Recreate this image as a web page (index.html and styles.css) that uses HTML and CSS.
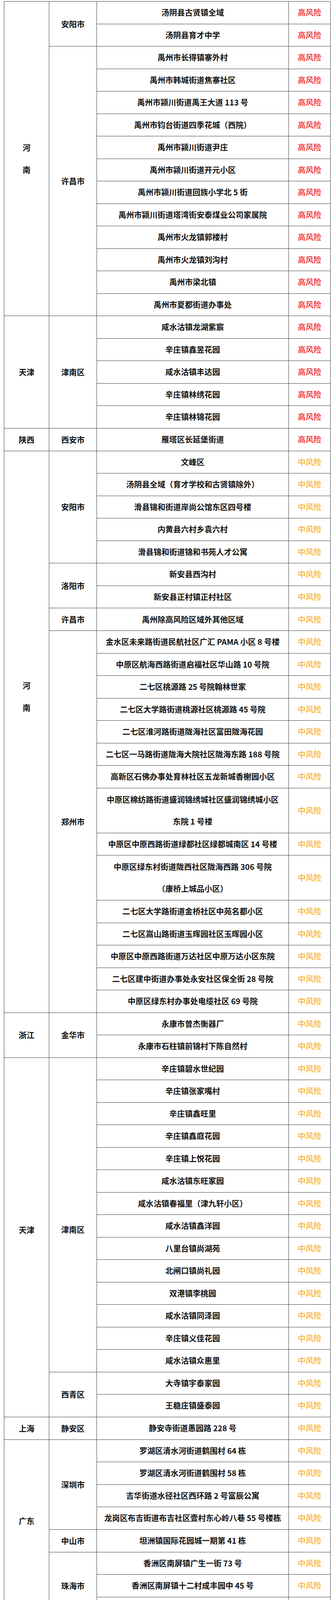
FILE: index.html
```html
<!DOCTYPE html>
<html lang="zh-CN">
<head>
<meta charset="utf-8">
<title>风险区域</title>
<link rel="stylesheet" href="styles.css">
</head>
<body>
<table class="risk-table">
<colgroup>
<col class="c-prov"><col class="c-city"><col class="c-place"><col class="c-risk">
</colgroup>
<tbody>
<tr><td rowspan="14" class="prov">河<br>南</td><td rowspan="2" class="city">安阳市</td><td class="place">汤阴县古贤镇全域</td><td class="risk high">高风险</td></tr>
<tr><td class="place">汤阴县育才中学</td><td class="risk high">高风险</td></tr>
<tr><td rowspan="12" class="city">许昌市</td><td class="place">禹州市长得镇寨外村</td><td class="risk high">高风险</td></tr>
<tr><td class="place">禹州市韩城街道焦寨社区</td><td class="risk high">高风险</td></tr>
<tr><td class="place">禹州市颍川街道禹王大道 113 号</td><td class="risk high">高风险</td></tr>
<tr><td class="place">禹州市钧台街道四季花城（西院）</td><td class="risk high">高风险</td></tr>
<tr><td class="place">禹州市颍川街道尹庄</td><td class="risk high">高风险</td></tr>
<tr><td class="place">禹州市颍川街道开元小区</td><td class="risk high">高风险</td></tr>
<tr><td class="place">禹州市颍川街道回族小学北 5 街</td><td class="risk high">高风险</td></tr>
<tr><td class="place">禹州市颍川街道塔湾街安泰煤业公司家属院</td><td class="risk high">高风险</td></tr>
<tr><td class="place">禹州市火龙镇郭楼村</td><td class="risk high">高风险</td></tr>
<tr><td class="place">禹州市火龙镇刘沟村</td><td class="risk high">高风险</td></tr>
<tr><td class="place">禹州市梁北镇</td><td class="risk high">高风险</td></tr>
<tr><td class="place">禹州市夏都街道办事处</td><td class="risk high">高风险</td></tr>
<tr><td rowspan="5" class="prov">天津</td><td rowspan="5" class="city">津南区</td><td class="place">咸水沽镇龙湖紫宸</td><td class="risk high">高风险</td></tr>
<tr><td class="place">辛庄镇鑫昱花园</td><td class="risk high">高风险</td></tr>
<tr><td class="place">咸水沽镇丰达园</td><td class="risk high">高风险</td></tr>
<tr><td class="place">辛庄镇林绣花园</td><td class="risk high">高风险</td></tr>
<tr><td class="place">辛庄镇林锦花园</td><td class="risk high">高风险</td></tr>
<tr><td class="prov">陕西</td><td class="city">西安市</td><td class="place">雁塔区长延堡街道</td><td class="risk high">高风险</td></tr>
<tr><td rowspan="23" class="prov prov-henan">河<br>南</td><td rowspan="5" class="city">安阳市</td><td class="place">文峰区</td><td class="risk mid">中风险</td></tr>
<tr><td class="place">汤阴县全域（育才学校和古贤镇除外）</td><td class="risk mid">中风险</td></tr>
<tr><td class="place">滑县锦和街道岸尚公馆东区四号楼</td><td class="risk mid">中风险</td></tr>
<tr><td class="place">内黄县六村乡袁六村</td><td class="risk mid">中风险</td></tr>
<tr><td class="place">滑县锦和街道锦和书苑人才公寓</td><td class="risk mid">中风险</td></tr>
<tr><td rowspan="2" class="city">洛阳市</td><td class="place">新安县西沟村</td><td class="risk mid">中风险</td></tr>
<tr><td class="place">新安县正村镇正村社区</td><td class="risk mid">中风险</td></tr>
<tr><td class="city">许昌市</td><td class="place">禹州除高风险区域外其他区域</td><td class="risk mid">中风险</td></tr>
<tr><td rowspan="15" class="city">郑州市</td><td class="place">金水区未来路街道民航社区广汇 PAMA 小区 8 号楼</td><td class="risk mid">中风险</td></tr>
<tr><td class="place">中原区航海西路街道启福社区华山路 10 号院</td><td class="risk mid">中风险</td></tr>
<tr><td class="place">二七区桃源路 25 号院翰林世家</td><td class="risk mid">中风险</td></tr>
<tr><td class="place">二七区大学路街道桃源社区桃源路 45 号院</td><td class="risk mid">中风险</td></tr>
<tr><td class="place">二七区淮河路街道陇海社区富田陇海花园</td><td class="risk mid">中风险</td></tr>
<tr><td class="place">二七区一马路街道陇海大院社区陇海东路 188 号院</td><td class="risk mid">中风险</td></tr>
<tr><td class="place">高新区石佛办事处育林社区五龙新城香榭园小区</td><td class="risk mid">中风险</td></tr>
<tr class="double"><td class="place">中原区棉纺路街道盛润锦绣城社区盛润锦绣城小区<br>东院 1 号楼</td><td class="risk mid">中风险</td></tr>
<tr><td class="place">中原区中原西路街道绿都社区绿都城南区 14 号楼</td><td class="risk mid">中风险</td></tr>
<tr class="double"><td class="place">中原区绿东村街道陇西社区陇海西路 306 号院<br>（康桥上城品小区）</td><td class="risk mid">中风险</td></tr>
<tr><td class="place">二七区大学路街道金桥社区中苑名都小区</td><td class="risk mid">中风险</td></tr>
<tr><td class="place">二七区嵩山路街道玉晖园社区玉晖园小区</td><td class="risk mid">中风险</td></tr>
<tr><td class="place">中原区中原西路街道万达社区中原万达小区东院</td><td class="risk mid">中风险</td></tr>
<tr><td class="place">二七区建中街道办事处永安社区保全街 28 号院</td><td class="risk mid">中风险</td></tr>
<tr><td class="place">中原区绿东村办事处电缆社区 69 号院</td><td class="risk mid">中风险</td></tr>
<tr><td rowspan="2" class="prov">浙江</td><td rowspan="2" class="city">金华市</td><td class="place">永康市曾杰衡器厂</td><td class="risk mid">中风险</td></tr>
<tr><td class="place">永康市石柱镇前锦村下陈自然村</td><td class="risk mid">中风险</td></tr>
<tr><td rowspan="16" class="prov prov-tj">天津</td><td rowspan="14" class="city city-jn">津南区</td><td class="place">辛庄镇碧水世纪园</td><td class="risk mid">中风险</td></tr>
<tr><td class="place">辛庄镇张家嘴村</td><td class="risk mid">中风险</td></tr>
<tr><td class="place">辛庄镇鑫旺里</td><td class="risk mid">中风险</td></tr>
<tr><td class="place">辛庄镇鑫庭花园</td><td class="risk mid">中风险</td></tr>
<tr><td class="place">辛庄镇上悦花园</td><td class="risk mid">中风险</td></tr>
<tr><td class="place">咸水沽镇东旺家园</td><td class="risk mid">中风险</td></tr>
<tr><td class="place">咸水沽镇春福里（津九轩小区）</td><td class="risk mid">中风险</td></tr>
<tr><td class="place">咸水沽镇鑫洋园</td><td class="risk mid">中风险</td></tr>
<tr><td class="place">八里台镇尚湖苑</td><td class="risk mid">中风险</td></tr>
<tr><td class="place">北闸口镇尚礼园</td><td class="risk mid">中风险</td></tr>
<tr><td class="place">双港镇李桃园</td><td class="risk mid">中风险</td></tr>
<tr><td class="place">咸水沽镇同泽园</td><td class="risk mid">中风险</td></tr>
<tr><td class="place">辛庄镇义佳花园</td><td class="risk mid">中风险</td></tr>
<tr><td class="place">咸水沽镇众惠里</td><td class="risk mid">中风险</td></tr>
<tr><td rowspan="2" class="city">西青区</td><td class="place">大寺镇宇泰家园</td><td class="risk mid">中风险</td></tr>
<tr><td class="place">王稳庄镇盛泰园</td><td class="risk mid">中风险</td></tr>
<tr><td class="prov">上海</td><td class="city">静安区</td><td class="place">静安寺街道愚园路 228 号</td><td class="risk mid">中风险</td></tr>
<tr><td rowspan="8" class="prov prov-gd">广东</td><td rowspan="4" class="city">深圳市</td><td class="place">罗湖区清水河街道鹤围村 64 栋</td><td class="risk mid">中风险</td></tr>
<tr><td class="place">罗湖区清水河街道鹤围村 58 栋</td><td class="risk mid">中风险</td></tr>
<tr><td class="place">吉华街道水径社区西环路 2 号富辰公寓</td><td class="risk mid">中风险</td></tr>
<tr><td class="place">龙岗区布吉街道布吉社区壹村东心岭八巷 55 号楼栋</td><td class="risk mid">中风险</td></tr>
<tr><td class="city">中山市</td><td class="place">坦洲镇国际花园城一期第 41 栋</td><td class="risk mid">中风险</td></tr>
<tr><td rowspan="3" class="city">珠海市</td><td class="place">香洲区南屏镇广生一街 73 号</td><td class="risk mid">中风险</td></tr>
<tr><td class="place">香洲区南屏镇十二村成丰园中 45 号</td><td class="risk mid">中风险</td></tr>
<tr><td class="place">香洲区南屏镇将军山榕园小区 2 栋</td><td class="risk mid">中风险</td></tr>
<tr class="xa"><td rowspan="17" class="prov">陕<br>西</td><td rowspan="17" class="city">西安市</td><td class="place">雁塔区小寨路街道</td><td class="risk mid">中风险</td></tr>
<tr class="xa"><td class="place">西咸新区沣东新城斗门街道</td><td class="risk mid">中风险</td></tr>
<tr class="xa"><td class="place">高新区细柳街道</td><td class="risk mid">中风险</td></tr>
<tr class="xa"><td class="place">西咸新区王寺街道</td><td class="risk mid">中风险</td></tr>
<tr class="xa"><td class="place">西咸新区沣东新城三桥街道</td><td class="risk mid">中风险</td></tr>
<tr class="xa"><td class="place">高新区丈八街道</td><td class="risk mid">中风险</td></tr>
<tr class="xa"><td class="place">高新区鱼化寨街道</td><td class="risk mid">中风险</td></tr>
<tr class="xa"><td class="place">长安区韦曲街道</td><td class="risk mid">中风险</td></tr>
<tr class="xa"><td class="place">长安区郭杜街道</td><td class="risk mid">中风险</td></tr>
<tr class="xa"><td class="place">新城区西一路街道</td><td class="risk mid">中风险</td></tr>
<tr class="xa"><td class="place">灞桥区洪庆街道</td><td class="risk mid">中风险</td></tr>
<tr class="xa"><td class="place">碑林区长安路街道</td><td class="risk mid">中风险</td></tr>
<tr class="xa"><td class="place">雁塔区漳浒寨街道</td><td class="risk mid">中风险</td></tr>
<tr class="xa"><td class="place">雁塔区杜城街道</td><td class="risk mid">中风险</td></tr>
<tr class="xa"><td class="place">雁塔区电子城街道</td><td class="risk mid">中风险</td></tr>
<tr class="xa"><td class="place">雁塔区等驾坡街道</td><td class="risk mid">中风险</td></tr>
<tr class="xa"><td class="place">雁塔区大雁塔街道</td><td class="risk mid">中风险</td></tr>
</tbody>
</table>
</body>
</html>
```

FILE: styles.css
```css
html, body {
  background: #ffffff;
}

body {
  margin: 3px 0 0 10px;
  font-family: "Noto Sans CJK SC", "Noto Sans", sans-serif;
  color: #111111;
}

.risk-table {
  border-collapse: collapse;
  table-layout: fixed;
  width: 835px;
}

.c-prov { width: 115px; }
.c-city { width: 122px; }
.c-place { width: 491px; }
.c-risk { width: 107px; }

.risk-table tr {
  height: 57.5px;
}

.risk-table tr.double {
  height: 115px;
}

.risk-table tr.xa {
  height: 60.8px;
}

.risk-table td {
  border: 1px solid #3c3c3c;
  padding: 0;
  text-align: center;
  vertical-align: middle;
  font-size: 20px;
  font-weight: 700;
  line-height: 28px;
  white-space: nowrap;
}

.risk-table td.prov,
.risk-table td.city {
  line-height: 57px;
}

.risk-table tr.double td.place {
  line-height: 56px;
}

.risk-table td.prov-henan {
  padding-bottom: 180px;
}

.risk-table td.prov-tj {
  padding-bottom: 37px;
}

.risk-table td.city-jn {
  padding-top: 76px;
}

.risk-table td.prov-gd {
  padding-bottom: 44px;
}

.risk-table td.risk {
  font-weight: 500;
}

.risk-table td.high {
  color: #ee1c1c;
}

.risk-table td.mid {
  color: #f5b130;
}
```
